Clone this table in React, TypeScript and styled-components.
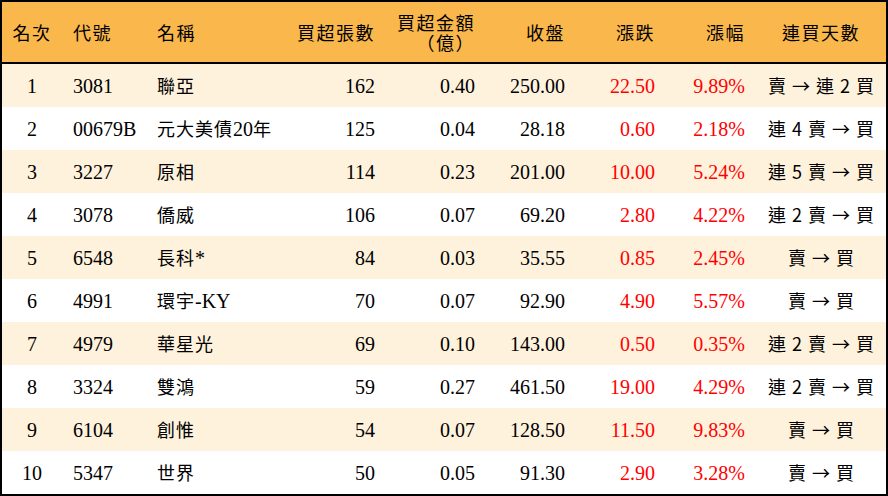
import React from 'react';
import styled, { createGlobalStyle } from 'styled-components';

const GlobalStyle = createGlobalStyle`
  html, body {
    margin: 0;
    padding: 0;
    background: #ffffff;
  }
  body {
    font-family: "Liberation Serif", "Noto Sans CJK TC", serif;
  }
`;

const columns = '60px 84px 140px 100px 100px 90px 90px 90px 130px';

const TableWrapper = styled.div`
  width: 888px;
  height: 496px;
  box-sizing: border-box;
  border: 2px solid #000;
  background: #fff;
  color: #000;
`;

const HeaderRow = styled.div`
  display: grid;
  grid-template-columns: ${columns};
  height: 60px;
  background: #F9B74C;
  border-bottom: 2px solid #000;
  align-items: center;
`;

const Row = styled.div<{ $striped: boolean }>`
  display: grid;
  grid-template-columns: ${columns};
  height: 43px;
  align-items: center;
  background: ${(p) => (p.$striped ? '#FEF2DD' : '#ffffff')};
`;

const HeadCell = styled.div<{ $align: 'left' | 'right' | 'center' }>`
  font-family: "Noto Sans CJK TC", serif;
  font-size: 18px;
  letter-spacing: 1.5px;
  line-height: 20px;
  padding: 0 ${(p) => (p.$align === 'center' ? 0 : 11)}px;
  white-space: nowrap;
  text-align: ${(p) => p.$align};
`;

const Cell = styled.div<{ $align: 'left' | 'right' | 'center'; $red?: boolean }>`
  font-size: 20px;
  line-height: 24px;
  padding: 0 11px;
  white-space: nowrap;
  text-align: ${(p) => p.$align};
  color: ${(p) => (p.$red ? '#FF0000' : '#000')};
`;

const Cjk = styled.span`
  font-family: "Noto Sans CJK TC", serif;
  font-size: 18px;
  letter-spacing: 1px;
`;

const Streak = styled.span`
  font-family: "Noto Sans CJK TC", serif;
  font-size: 18px;
  word-spacing: 2px;
`;

const rows = [
  ['1', '3081', '聯亞', '162', '0.40', '250.00', '22.50', '9.89%', '賣 → 連 2 買'],
  ['2', '00679B', '元大美債20年', '125', '0.04', '28.18', '0.60', '2.18%', '連 4 賣 → 買'],
  ['3', '3227', '原相', '114', '0.23', '201.00', '10.00', '5.24%', '連 5 賣 → 買'],
  ['4', '3078', '僑威', '106', '0.07', '69.20', '2.80', '4.22%', '連 2 賣 → 買'],
  ['5', '6548', '長科*', '84', '0.03', '35.55', '0.85', '2.45%', '賣 → 買'],
  ['6', '4991', '環宇-KY', '70', '0.07', '92.90', '4.90', '5.57%', '賣 → 買'],
  ['7', '4979', '華星光', '69', '0.10', '143.00', '0.50', '0.35%', '連 2 賣 → 買'],
  ['8', '3324', '雙鴻', '59', '0.27', '461.50', '19.00', '4.29%', '連 2 賣 → 買'],
  ['9', '6104', '創惟', '54', '0.07', '128.50', '11.50', '9.83%', '賣 → 買'],
  ['10', '5347', '世界', '50', '0.05', '91.30', '2.90', '3.28%', '賣 → 買'],
];

// split name into CJK and latin runs so each gets its own font
const renderName = (name: string) =>
  name.split(/([\u4e00-\u9fff]+)/).filter(Boolean).map((part, i) =>
    /[\u4e00-\u9fff]/.test(part) ? <Cjk key={i}>{part}</Cjk> : <span key={i}>{part}</span>
  );

const App = () => {
  return (
    <>
      <GlobalStyle />
      <TableWrapper>
        <HeaderRow>
          <HeadCell $align="center">名次</HeadCell>
          <HeadCell $align="left">代號</HeadCell>
          <HeadCell $align="left">名稱</HeadCell>
          <HeadCell $align="right">買超張數</HeadCell>
          <HeadCell $align="right">
            買超金額
            <br />
            （億）
          </HeadCell>
          <HeadCell $align="right">收盤</HeadCell>
          <HeadCell $align="right">漲跌</HeadCell>
          <HeadCell $align="right">漲幅</HeadCell>
          <HeadCell $align="center">連買天數</HeadCell>
        </HeaderRow>
        {rows.map((r, index) => (
          <Row key={index} $striped={index % 2 === 0}>
            <Cell $align="center">{r[0]}</Cell>
            <Cell $align="left">{r[1]}</Cell>
            <Cell $align="left">{renderName(r[2])}</Cell>
            <Cell $align="right">{r[3]}</Cell>
            <Cell $align="right">{r[4]}</Cell>
            <Cell $align="right">{r[5]}</Cell>
            <Cell $align="right" $red>{r[6]}</Cell>
            <Cell $align="right" $red>{r[7]}</Cell>
            <Cell $align="center">
              <Streak>{r[8]}</Streak>
            </Cell>
          </Row>
        ))}
      </TableWrapper>
    </>
  );
};

export default App;
